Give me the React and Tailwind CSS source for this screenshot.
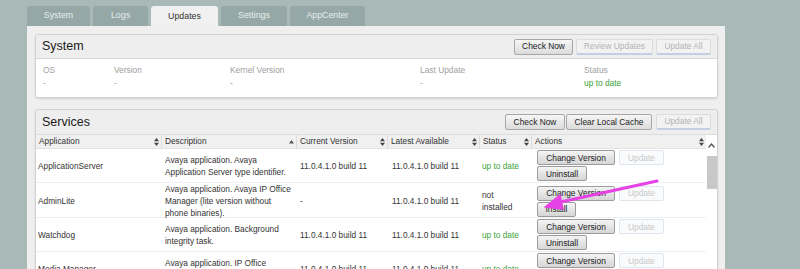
import React from "react";

const font = { fontFamily: '"Liberation Sans", Arial, sans-serif' };

function SortBoth() {
  return (
    <svg width="5" height="8" viewBox="0 0 5 8" className="shrink-0">
      <path d="M2.5 0 L5 3.2 L0 3.2 Z" fill="#444" />
      <path d="M2.5 8 L5 4.8 L0 4.8 Z" fill="#444" />
    </svg>
  );
}
function SortUp() {
  return (
    <svg width="5" height="4" viewBox="0 0 5 4" className="shrink-0">
      <path d="M2.5 0 L5 3.5 L0 3.5 Z" fill="#555" />
    </svg>
  );
}

function HBtn({ children, disabled, w }) {
  return disabled ? (
    <div className={`h-[16px] ${w} flex items-center justify-center text-[8.4px] text-[#b4b4b4] bg-[#f2f2f2] border border-[#dcdcdc] border-b-[#c4cfe4] border-b-2 rounded-[2px] whitespace-nowrap`}>
      {children}
    </div>
  ) : (
    <div className={`h-[16px] ${w} flex items-center justify-center text-[8.4px] text-[#222] bg-gradient-to-b from-[#f6f6f6] to-[#dcdcdc] border border-[#a8a8a8] rounded-[2px] whitespace-nowrap`}>
      {children}
    </div>
  );
}

function Btn({ children, disabled, w }) {
  return disabled ? (
    <div className={`h-[15px] ${w} flex items-center justify-center text-[8.4px] text-[#c8c8c8] bg-[#fafbfc] border border-[#e0e6ee] rounded-[2px] whitespace-nowrap`}>
      {children}
    </div>
  ) : (
    <div className={`h-[15px] ${w} flex items-center justify-center text-[8.4px] text-[#222] bg-gradient-to-b from-[#f4f4f4] to-[#d6d6d6] border border-[#9c9c9c] rounded-[2px] whitespace-nowrap`}>
      {children}
    </div>
  );
}

const cols = "grid grid-cols-[125px_135px_91px_92px_52px_175px]";

const rows = [
  {
    app: "ApplicationServer",
    desc: ["Avaya application. Avaya", "Application Server type identifier."],
    cur: "11.0.4.1.0 build 11",
    lat: "11.0.4.1.0 build 11",
    status: "up",
    second: "Uninstall",
    h: "h-[34px]",
  },
  {
    app: "AdminLite",
    desc: ["Avaya application. Avaya IP Office", "Manager (lite version without", "phone binaries)."],
    cur: "-",
    lat: "11.0.4.1.0 build 11",
    status: "not",
    second: "Install",
    h: "h-[35px]",
  },
  {
    app: "Watchdog",
    desc: ["Avaya application. Background", "integrity task."],
    cur: "11.0.4.1.0 build 11",
    lat: "11.0.4.1.0 build 11",
    status: "up",
    second: "Uninstall",
    h: "h-[34px]",
  },
  {
    app: "Media Manager",
    desc: ["Avaya application. IP Office", "Media Manager"],
    cur: "11.0.4.1.0 build 11",
    lat: "11.0.4.1.0 build 11",
    status: "up",
    second: "Uninstall",
    h: "h-[34px]",
  },
];

export default function App() {
  const tabs = ["System", "Logs", "Updates", "Settings", "AppCenter"];
  const tabW = ["w-[63px]", "w-[55px]", "w-[67px]", "w-[66px]", "w-[75px]"];
  return (
    <div style={font} className="w-[800px] h-[269px] overflow-hidden bg-[#a9b9b8] relative">
      <div className="flex gap-[3px] pl-[27px] pt-[6px] h-[26px]">
        {tabs.map((t, i) =>
          t === "Updates" ? (
            <div key={t} className={`${tabW[i]} h-[21px] bg-[#f0f0f0] rounded-t-[3px] flex items-center justify-center text-[8.8px] text-[#333] relative z-10`}>
              {t}
            </div>
          ) : (
            <div key={t} className={`${tabW[i]} h-[20px] bg-[#95a8a7] rounded-t-[3px] flex items-center justify-center text-[8.8px] text-[#e6eded]`}>
              {t}
            </div>
          )
        )}
      </div>
      <div className="ml-[27px] w-[698px] h-[243px] bg-[#efefef] pt-[8px] pl-[8px]">
        {/* System card */}
        <div className="w-[683px] border border-[#d2d2d2] rounded-[3px] shadow-[0_1px_2px_rgba(0,0,0,0.12)] overflow-hidden">
          <div className="h-[24px] bg-[#eeeeee] border-b border-[#d8d8d8] flex items-center justify-between pl-[6px] pr-[6px]">
            <div className="text-[12.5px] text-[#1a1a1a]">System</div>
            <div className="flex gap-[3px]">
              <HBtn w="w-[59px]">Check Now</HBtn>
              <HBtn w="w-[77px]" disabled>Review Updates</HBtn>
              <HBtn w="w-[55px]" disabled>Update All</HBtn>
            </div>
          </div>
          <div className="h-[38px] bg-white grid grid-cols-[71px_116px_190px_164px_1fr] pl-[7px] pt-[5px] text-[8.4px] leading-[13px]">
            {[
              ["OS", "-"],
              ["Version", "-"],
              ["Kernel Version", "-"],
              ["Last Update", "-"],
              ["Status", "up to date"],
            ].map(([l, v]) => (
              <div key={l} className="flex flex-col">
                <div className="text-[#a0a0a0]">{l}</div>
                <div className={l === "Status" ? "text-[#3aa53a]" : "text-[#999]"}>{v}</div>
              </div>
            ))}
          </div>
        </div>

        {/* Services card */}
        <div className="mt-[11px] w-[683px] h-[200px] border border-[#d2d2d2] rounded-[3px] bg-[#eeeeee] shadow-[0_1px_2px_rgba(0,0,0,0.12)] overflow-hidden">
          <div className="h-[25px] flex items-center justify-between pl-[6px] pr-[6px] border-b border-[#dcdcdc]">
            <div className="text-[12.5px] text-[#1a1a1a]">Services</div>
            <div className="flex gap-[1px]">
              <HBtn w="w-[60px]">Check Now</HBtn>
              <HBtn w="w-[86px]">Clear Local Cache</HBtn>
              <div className="w-[2px]" />
              <HBtn w="w-[55px]" disabled>Update All</HBtn>
            </div>
          </div>
          <div className="flex">
            <div className="w-[670px]">
              <div className={`${cols} h-[14px] bg-[#f0f0f0] text-[8.3px] text-[#333] border-b border-[#e2e2e2]`}>
                {[
                  ["Application", <SortBoth />],
                  ["Description", <SortUp />],
                  ["Current Version", <SortBoth />],
                  ["Latest Available", <SortBoth />],
                  ["Status", <SortBoth />],
                  ["Actions", <SortBoth />],
                ].map(([h, ic], i) => (
                  <div key={h} className={`flex items-center justify-between pl-[3px] pr-[2px] ${i > 0 ? "border-l border-[#dcdcdc]" : ""}`}>
                    <span>{h}</span>
                    {ic}
                  </div>
                ))}
              </div>
              <div className="bg-white">
                {rows.map((r) => (
                  <div key={r.app} className={`${cols} ${r.h} text-[8.3px] leading-[12px] text-[#333] border-b border-[#eef0f4]`}>
                    <div className="flex items-center pl-[2px]">{r.app}</div>
                    <div className="flex flex-col justify-center pl-[4px]">
                      {r.desc.map((d) => (
                        <div key={d} className="whitespace-nowrap">{d}</div>
                      ))}
                    </div>
                    <div className="flex items-center pl-[4px]">{r.cur}</div>
                    <div className="flex items-center pl-[5px]">{r.lat}</div>
                    <div className="flex items-center pl-[3px]">
                      {r.status === "up" ? (
                        <span className="text-[#3aa53a]">up to date</span>
                      ) : (
                        <span className="leading-[12px]">not<br />installed</span>
                      )}
                    </div>
                    <div className="flex flex-col gap-[1px] pl-[6px] justify-center">
                      <div className="flex gap-[4px]">
                        <Btn w="w-[78px]">Change Version</Btn>
                        <Btn w="w-[45px]" disabled>Update</Btn>
                      </div>
                      <Btn w={r.second === "Install" ? "w-[39px]" : "w-[50px]"}>{r.second}</Btn>
                    </div>
                  </div>
                ))}
              </div>
            </div>
            <div className="w-[11px] bg-white flex flex-col items-center">
              <div className="h-[21px] w-full flex items-center justify-center">
                <svg width="7" height="5" viewBox="0 0 7 5">
                  <path d="M0.5 4.5 L3.5 1 L6.5 4.5" fill="none" stroke="#555" strokeWidth="1.3" />
                </svg>
              </div>
              <div className="w-[10px] h-[33px] bg-[#c8c8c8]" />
            </div>
          </div>
        </div>
      </div>

      {/* Annotation arrow */}
      <svg className="absolute left-0 top-0 pointer-events-none" width="800" height="269">
        <line x1="657" y1="181" x2="556" y2="203" stroke="#e642e6" strokeWidth="3" strokeLinecap="round" />
        <path d="M545 207 L560 195 L563 209 Z" fill="#e642e6" stroke="#e642e6" strokeWidth="1.5" strokeLinejoin="round" />
      </svg>
    </div>
  );
}
